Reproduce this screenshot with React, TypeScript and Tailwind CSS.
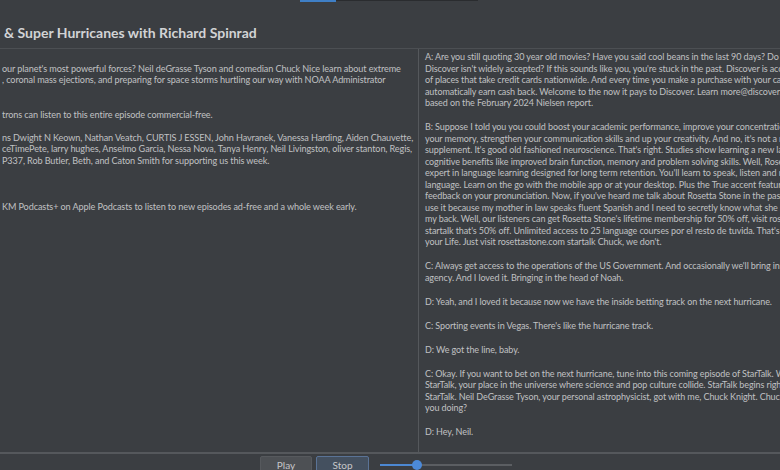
import React from "react";

const leftLines = [
  "",
  "our planet's most powerful forces? Neil deGrasse Tyson and comedian Chuck Nice learn about extreme",
  ", coronal mass ejections, and preparing for space storms hurtling our way with NOAA Administrator",
  "",
  "",
  "trons can listen to this entire episode commercial-free.",
  "",
  "ns Dwight N Keown, Nathan Veatch, CURTIS J ESSEN, John Havranek, Vanessa Harding, Aiden Chauvette,",
  "ceTimePete, larry hughes, Anselmo Garcia, Nessa Nova, Tanya Henry, Neil Livingston, oliver stanton, Regis,",
  "P337, Rob Butler, Beth, and Caton Smith for supporting us this week.",
  "",
  "",
  "",
  "KM Podcasts+ on Apple Podcasts to listen to new episodes ad-free and a whole week early.",
];

const transcript = [
  [
    "A: Are you still quoting 30 year old movies? Have you said cool beans in the last 90 days? Do you think",
    "Discover isn't widely accepted? If this sounds like you, you're stuck in the past. Discover is accepted at 99%",
    "of places that take credit cards nationwide. And every time you make a purchase with your card, you",
    "automatically earn cash back. Welcome to the now it pays to Discover. Learn more@discover.com/credit card",
    "based on the February 2024 Nielsen report.",
  ],
  [
    "B: Suppose I told you you could boost your academic performance, improve your concentration, sharpen",
    "your memory, strengthen your communication skills and up your creativity. And no, it's not a new",
    "supplement. It's good old fashioned neuroscience. That's right. Studies show learning a new language has",
    "cognitive benefits like improved brain function, memory and problem solving skills. Well, Rosetta Stone is the",
    "expert in language learning designed for long term retention. You'll learn to speak, listen and read a new",
    "language. Learn on the go with the mobile app or at your desktop. Plus the True accent feature gives",
    "feedback on your pronunciation. Now, if you've heard me talk about Rosetta Stone in the past, you know I",
    "use it because my mother in law speaks fluent Spanish and I need to secretly know what she says behind",
    "my back. Well, our listeners can get Rosetta Stone's lifetime membership for 50% off, visit rosettastone.com",
    "startalk that's 50% off. Unlimited access to 25 language courses por el resto de tuvida. That's for the rest of",
    "your Life. Just visit rosettastone.com startalk Chuck, we don't.",
  ],
  [
    "C: Always get access to the operations of the US Government. And occasionally we'll bring in the head of an",
    "agency. And I loved it. Bringing in the head of Noah.",
  ],
  ["D: Yeah, and I loved it because now we have the inside betting track on the next hurricane."],
  ["C: Sporting events in Vegas. There's like the hurricane track."],
  ["D: We got the line, baby."],
  [
    "C: Okay. If you want to bet on the next hurricane, tune into this coming episode of StarTalk. Welcome to",
    "StarTalk, your place in the universe where science and pop culture collide. StarTalk begins right now. This is",
    "StarTalk. Neil DeGrasse Tyson, your personal astrophysicist, got with me, Chuck Knight. Chuck, how are",
    "you doing?",
  ],
  ["D: Hey, Neil."],
];

export default function App() {
  return (
    <div className="flex h-[470px] w-[780px] flex-col overflow-hidden bg-[#3b3e42] font-['Lato',sans-serif] text-[#c0c1c3]">
      {/* header */}
      <div className="relative h-[48px] shrink-0">
        <div className="absolute left-[300px] top-0 h-[2px] w-[36px] bg-[#3f7fc6]" />
        <div className="absolute left-[336px] top-0 h-px w-[142px] bg-[#2a2c2f]" />
        <h1 className="whitespace-nowrap pl-[4px] pt-[24px] text-[14px] font-bold leading-[18px] text-[#d2d3d5]">
          &amp; Super Hurricanes with Richard Spinrad
        </h1>
      </div>

      {/* panes */}
      <div className="flex min-h-0 flex-1 border-t border-[#4c4f53]">
        <div className="w-[418px] shrink-0 overflow-hidden pl-[2px] pt-[2px] text-[9.1px] leading-[11.5px] tracking-[-0.1px]">
          {leftLines.map((l, i) => (
            <div key={i} className="h-[11.5px] whitespace-pre">
              {l}
            </div>
          ))}
        </div>
        <div className="min-w-0 flex-1 overflow-hidden border-l border-[#55585c] pl-[6px] pt-[2px] text-[9px] leading-[11.5px] tracking-[-0.1px]">
          {transcript.map((p, i) => (
            <div key={i} className="mb-[12.5px]">
              {p.map((l, j) => (
                <div key={j} className="whitespace-pre">
                  {l}
                </div>
              ))}
            </div>
          ))}
        </div>
      </div>

      {/* controls */}
      <div className="flex h-[18px] shrink-0 items-start gap-[4px] border-t-2 border-[#55585c] pl-[260px] pt-[2px]">
        <button className="flex h-[18px] w-[52px] items-center justify-center rounded-[2px] border border-[#56595d] bg-[#4d5054] text-[10px] text-[#c6c7c9]">
          Play
        </button>
        <button className="flex h-[18px] w-[53px] items-center justify-center rounded-[2px] border border-[#5a7396] bg-[#44505f] text-[10px] text-[#c6c7c9]">
          Stop
        </button>
        <div className="ml-[7px] flex h-[18px] w-[132px] items-center">
          <div className="relative h-[2px] w-full bg-[#5b5e62]">
            <div className="absolute left-0 top-0 h-[2px] w-[37px] bg-[#4c88d2]" />
            <div className="absolute left-[32px] top-[-4px] h-[10px] w-[10px] rounded-full bg-[#4c8ad8]" />
          </div>
        </div>
      </div>
    </div>
  );
}
